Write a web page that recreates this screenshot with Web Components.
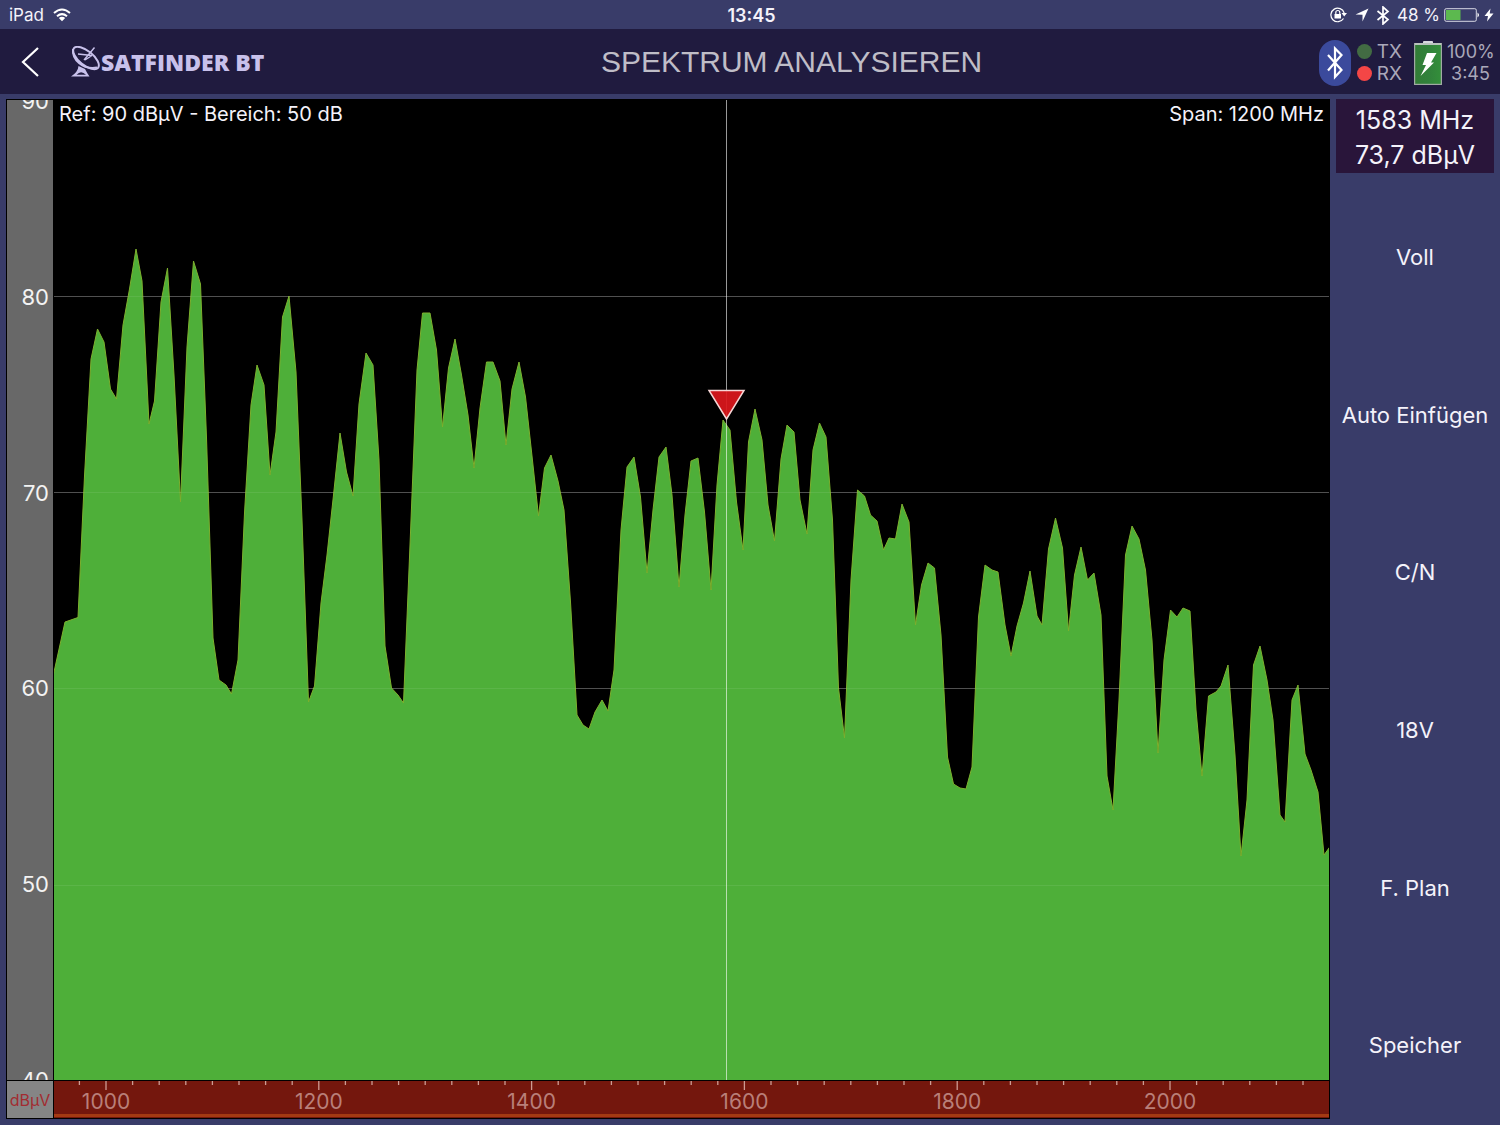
<!DOCTYPE html>
<html lang="de">
<head>
<meta charset="utf-8">
<title>Satfinder BT</title>
<style>
  html, body { margin: 0; height: 100%; }
  body { background: #393c69; color: #f4f2fa; font-family: Inter, "Liberation Sans", sans-serif; }
</style>
</head>
<body>
<sat-app></sat-app>
<script>
const define = (name, html, setup) => {
  const template = document.createElement('template');
  template.innerHTML = html;
  customElements.define(name, class extends HTMLElement {
    constructor() {
      super();
      this.attachShadow({ mode: 'open' }).append(template.content.cloneNode(true));
      if (setup) setup(this.shadowRoot);
    }
  });
};

define('status-bar', `
<style>
  :host { display: grid; grid-template-columns: 1fr auto 1fr; align-items: center; height: 30px; margin-bottom: -1px; padding: 0 6px 0 9px; font-size: 17px; box-sizing: border-box; }
  .group { display: flex; align-items: center; gap: 9px; }
  .right { justify-content: flex-end; gap: 7px; }
  .power { display: flex; align-items: center; gap: 4px; }
  time { font-weight: 600; font-size: 18px; }
  svg { display: block; }
</style>
<div class="group"><span>iPad</span>
  <svg width="18" height="14" viewBox="0 0 18 14" fill="none" stroke="#fff" stroke-width="2"><path d="M1 5Q9-2 17 5M4 8.300Q9 4 14 8.300"/><path d="M5.800 10Q9 7.500 12.200 10L9 13.300Z" fill="#fff" stroke="none"/></svg>
</div>
<time>13:45</time>
<div class="group right">
  <svg width="18" height="16" viewBox="0 0 18 16" fill="none" stroke="#fff" stroke-width="1.200"><path d="M14.200 6A6.800 6.800 0 1 0 13.500 11.500"/><path d="M11.500 6h5.500l-2.800 3.500z" fill="#fff" stroke="none"/><rect x="4.500" y="7" width="6.500" height="4.500" fill="#fff" stroke="none"/><path d="M5.800 7V5.500a2 2 0 0 1 4 0V7"/></svg>
  <svg width="14" height="14" viewBox="0 0 14 14"><path d="M13.500.5L7.500 13.500V6.800L.5 6.500Z" fill="#fff"/></svg>
  <svg width="14" height="19" viewBox="0 0 14 19" fill="none" stroke="#fff" stroke-width="1.700"><path d="M1.500 5L12 13.500 7 18V1L12 5.500 1.500 14"/></svg>
  <div class="power">
  <span>48 %</span>
  <svg width="36" height="14" viewBox="0 0 36 14"><rect x=".7" y=".7" width="31.600" height="12.600" rx="1.500" fill="none" stroke="#d8d8e4"/><rect x="2" y="2" width="14.500" height="10" fill="#5cb94f"/><path d="M33.500 4.500q3 2.500 0 5z" fill="#fff"/></svg>
  <svg width="10" height="14" viewBox="0 0 10 14"><path d="M6.500.5L.5 8H4L3 13.500 9.500 5.500H5.700Z" fill="#fff"/></svg>
  </div>
</div>`);

define('sat-logo', `
<style>
  :host { display: flex; align-items: center; color: #c8c1eb; font: 800 23px/32px "Open Sans", sans-serif; }
  svg { display: block; }
</style>
<svg width="31" height="32" viewBox="0 0 31 32" fill="none" stroke="#c8c1eb" stroke-width="2"><ellipse cx="16" cy="12" rx="15.500" ry="7" transform="rotate(39 16 12)"/><path d="M3 3C2 13 12 24 27 21.500"/><path d="M14 14L24.500 1.500M8 8L22 9.500M15 14L22 9.500" stroke-width="1.400"/><path d="M8.500 20Q8 26 1 30.500H19.500Q17 27 15 23Z" fill="#c8c1eb" stroke="none"/><path d="M6.500 28.800Q11 23.500 16 28.800Z" fill="#201b3f" stroke="none"/></svg>
<slot></slot>`);

define('link-status', `
<style>
  :host { display: flex; align-items: center; color: #aaa8b9; font-size: 18px; line-height: 22px; padding-top: 2px; }
  svg { display: block; }
  ul { list-style: none; margin: 0 12px 0 6px; padding: 0; font-size: 19px; }
  li { display: flex; align-items: center; gap: 5px; }
  i { width: 15px; height: 15px; border-radius: 50%; background: #426b43; }
  .rx { background: #f44646; }
  p { margin: 0 0 0 5px; text-align: center; width: 47px; }
</style>
<svg width="32" height="46" viewBox="0 0 32 46"><rect width="32" height="46" rx="16" fill="#3b4a9c"/><path d="M9 15L22.500 30 16 37V8.500L22.500 15 9 30.500" fill="none" stroke="#fff" stroke-width="2.200"/></svg>
<ul><li><i></i>TX</li><li><i class="rx"></i>RX</li></ul>
<svg width="28" height="44" viewBox="0 0 28 44"><defs><linearGradient id="cell"><stop stop-color="#327d36"/><stop offset=".5" stop-color="#31813b"/><stop offset="1" stop-color="#338f3a"/></linearGradient></defs><rect x="9" width="10" height="4" rx="1" fill="#d7d9df"/><rect x=".6" y="2.600" width="26.800" height="40.800" fill="url(#cell)" stroke="#a0aaa3" stroke-width="1.200"/><path d="M1 3H27" stroke="#b9c3bd" stroke-width="2"/><path d="M13 12H22.500L17 21.500H20L6.500 35 12 24H8.500Z" fill="#fff"/></svg>
<p>100%<br>3:45</p>`);

define('app-header', `
<style>
  :host { display: flex; align-items: center; height: 65px; padding: 0 6px 0 12px; background: #201b3f; }
  button { border: 0; padding: 0; margin: 0 22px 0 0; width: 36px; height: 44px; display: grid; place-items: center; background: none; }
  h1 { flex: 1; margin: 0; text-align: center; color: #bfbdc7; font: 400 30px/40px "Liberation Sans", sans-serif; padding-top: 1px; }
</style>
<button aria-label="Zurück"><svg width="18" height="30" viewBox="0 0 18 30"><path d="M17 1L2 15 17 29" fill="none" stroke="#fff" stroke-width="2.200"/></svg></button>
<sat-logo>SATFINDER BT</sat-logo>
<h1>SPEKTRUM ANALYSIEREN</h1>
<link-status></link-status>`);

define('spectrum-chart', `
<style>
  :host { display: grid; grid-template: minmax(0, 1fr) 37px / 46px minmax(0, 1fr); gap: 1px; padding: 1px; background: #000; }
  .levels { display: flex; flex-direction: column; justify-content: space-between; overflow: hidden; background: #686868; font-size: 22px; text-align: right; padding: 1px 4px 0 0; color: #f3f3f3; }
  .levels span { height: 0; line-height: 0; }
  .unit { display: grid; place-items: center; background: #858585; color: #a22c31; font-size: 16px; }
  .plot { display: grid; overflow: hidden; }
  .plot > * { grid-area: 1 / 1; }
  svg { display: block; width: 100%; height: 100%; min-height: 0; }
  .info { display: flex; justify-content: space-between; align-items: start; padding: 1px 5px 0; font-size: 20px; line-height: 26px; z-index: 1; }
  .freq { display: grid; grid-template-rows: 10px 21px 6px; background: #74170d; color: #b97f79; overflow: hidden; }
  .labels { display: flex; justify-content: space-between; padding: 0 159px 0 52px; font-size: 21px; line-height: 21px; }
  .labels span { width: 0; display: flex; justify-content: center; }
  .rule { border: solid #74170d; border-width: 2px 0 1px; background: #a43a13; }
</style>
<div class="levels"><span>90</span><span>80</span><span>70</span><span>60</span><span>50</span><span>40</span></div>
<div class="plot">
  <svg viewBox="54 100 1275 980" preserveAspectRatio="none" role="img" aria-label="Spektrum">
    <path class="grid" stroke="#424242"/>
    <path class="trace" fill="#4eaf39" stroke="#7db02e"/>
    <path class="grid" stroke="#fff" stroke-opacity=".08"/>
    <path d="M726.500 100V1080" stroke="#fff" stroke-opacity=".6"/>
    <path d="M709 390.500H744L726.500 419Z" fill="#dc171c" fill-opacity=".93" stroke="#f6d5d5" stroke-width="1.500"/>
  </svg>
  <div class="info"><span>Ref: 90 dBµV - Bereich: 50 dB</span><span>Span: 1200 MHz</span></div>
</div>
<div class="unit">dBµV</div>
<div class="freq">
  <svg viewBox="0 0 1275 10" preserveAspectRatio="none"><path class="ticks" stroke="#cd9b92" stroke-width="1.300"/></svg>
  <div class="labels"><span>1000</span><span>1200</span><span>1400</span><span>1600</span><span>1800</span><span>2000</span></div>
  <div class="rule"></div>
</div>`, root => {
  const trace = `54,672 65,622 78,617.5 84.5,476 91,359 97.5,329 104,342 110.5,389 116.5,399 123,325 129.5,289 136,249 142,281 149,424 154.5,401 161,302 167.5,268 174,375 180.5,502 187,347 193.5,261 200.5,284 206.5,438 213,638 219,680 226,685 231.5,694 238,660 244.5,513 251,405 257,365 264,385 270,475 276,432 282.5,317 289,296 296,372 302,520 308.5,702 314.5,686 321,603 327,555 333.5,495 340,433 346.5,472 353,496 359,404 366,353 373,365 379,460 385,646 391.5,688 398,695 403.5,703 410,545 417,370 422.5,313 430,313 436.5,350 442.5,427 448.5,368 455,339 461.5,375 468,415 474,468 480,408 486.5,362 493,362 500,381 506,445 512,389 519,362 525.5,397 532,456 538.5,516 544.5,468 551,455 558,481 564,510 570.5,602 577,715 583,725 589,729 595,712 602,700 608,711 614,670 621,530 627,467 634,457 640.5,497 647,573 653,510 659,457 666,447 672,495 679,587 685,515 691,461 698,458 704.5,512 711,590 717,485 723,420 730,430 736.5,502 743,550 748.5,442 755,409 762,440 768,505 774.5,541 781,459 787,425 794,432 800,500 807,534 813,450 819.5,423 826,437 832.5,520 838.5,688 844.5,738 851,580 857.5,490 864.5,496 870.5,515 877,521 883.5,550 889,538 895.5,539 902,504 909,522 915.5,625 921.5,585 928,563 934.5,568 941,635 947.5,757 953.5,784 960,788 966,789 972,767 978.5,617 985,565 992,570 998,572 1005,625 1011,656 1017,626 1023.5,603 1030,571 1037,616 1042,625 1048.5,549 1055.5,518 1062.5,548 1068.5,631 1074.5,575 1081,547 1087.5,580 1094,573 1101,615 1107,776 1113,810 1119,700 1125.5,555 1132,526 1139,539 1145.5,570 1152,640 1158,753 1164,660 1170.5,610 1177,617 1183,608 1190,611 1196,710 1202,776 1208.5,696 1216,692 1221,686 1228,665 1235,755 1241,856 1247,800 1253.5,665 1260,646 1267,680 1273,720 1280,815 1285,822 1292,700 1298,685 1305,754 1311,770 1318,792 1324,855 1329,848`;
  root.querySelector('.trace').setAttribute('d', `M50,1085 L50,690 ${trace} L1335,840 L1335,1085Z`);
  root.querySelectorAll('.grid').forEach(g => g.setAttribute('d', [296, 492, 688, 885].map(y => `M54 ${y}.5H1329`).join('')));
  let ticks = '';
  for (let mhz = 975; mhz <= 2125; mhz += 25) {
    ticks += `M${52 + (mhz - 1000) * 1.064} 0V${mhz % 200 ? 4 : 9}`;
  }
  root.querySelector('.ticks').setAttribute('d', ticks);
});

define('side-panel', `
<style>
  :host { display: flex; flex-direction: column; }
  output { display: block; padding: 4px 0 0; height: 70px; margin-bottom: 5px; background: #29153a; text-align: center; font-size: 25px; line-height: 35px; }
  nav { flex: 1; display: flex; flex-direction: column; }
  button { flex: 1; border: 0; padding: 0; background: none; color: inherit; font: inherit; font-size: 22px; white-space: nowrap; }
</style>
<output>1583 MHz<br>73,7 dBµV</output>
<nav><button>Voll</button><button>Auto Einfügen</button><button>C/N</button><button>18V</button><button>F. Plan</button><button>Speicher</button></nav>`);

define('sat-app', `
<style>
  :host { display: flex; flex-direction: column; min-height: 100vh; }
  main { flex: 1; display: grid; grid-template-columns: minmax(0, 1fr) 158px; gap: 6px; padding: 5px 6px 2px; }
  spectrum-chart { margin-bottom: 5px; }
</style>
<status-bar></status-bar>
<app-header></app-header>
<main><spectrum-chart></spectrum-chart><side-panel></side-panel></main>`);
</script>
</body>
</html>
